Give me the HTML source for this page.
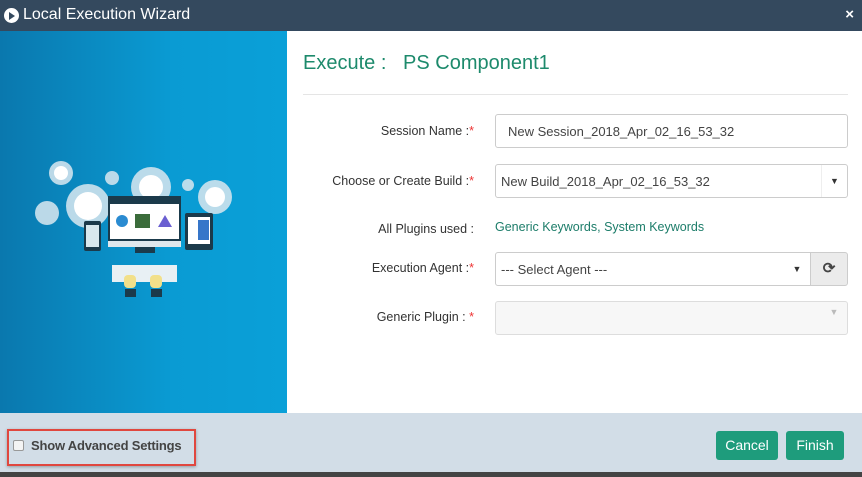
<!DOCTYPE html>
<html><head><style>
*{box-sizing:border-box;margin:0;padding:0}
body{width:862px;height:477px;overflow:hidden;font-family:"Liberation Sans",sans-serif;background:#fff;position:relative;font-size:13px;color:#333}
.hdr{position:absolute;left:0;top:0;width:862px;height:31px;background:#34495e;color:#fff;font-size:16px}
.hdr .t{position:absolute;left:23px;top:6px}
.hdr .ic{position:absolute;left:4px;top:8px;width:15px;height:15px;border-radius:50%;background:#fff}
.hdr .ic:after{content:"";position:absolute;left:5px;top:3.5px;border-left:6px solid #34495e;border-top:4px solid transparent;border-bottom:4px solid transparent}
.hdr .x{position:absolute;right:8px;top:6px;font-size:15px;font-weight:bold}
.left{position:absolute;left:0;top:31px;width:287px;height:382px;background:linear-gradient(90deg,#0a78ae,#0a9bd3 60%,#0aa0d8)}
.h2{position:absolute;left:303px;top:52px;font-size:20px;color:#1d8a6c}
.sep{position:absolute;left:303px;top:94px;width:545px;height:1px;background:#e5e5e5}
.lbl{position:absolute;right:388px;text-align:right;font-size:12.5px;color:#333}
.lbl b{color:#e33;font-weight:normal}
.in{position:absolute;left:495px;width:353px;height:34px;border:1px solid #ccc;border-radius:3px;font-size:13px;padding:9px 12px;color:#444}
.arr{position:absolute;right:0;top:0;width:26px;height:32px;border-left:1px solid #eee;font-size:9px;text-align:center;line-height:32px;color:#333}
.foot{position:absolute;left:0;top:413px;width:862px;height:59px;background:#d2dde7}
.bot{position:absolute;left:0;top:472px;width:862px;height:5px;background:#444}
.btn{position:absolute;top:431px;height:29px;background:#1e9c7c;color:#fff;border-radius:3px;font-size:14px;text-align:center;line-height:29px}
</style></head><body>
<div class="hdr"><div class="ic"></div><div class="t">Local Execution Wizard</div><div class="x">×</div></div>
<div class="left">
<svg width="287" height="382" viewBox="0 31 287 382">
<g fill="#cfe3ee" opacity="0.9">
<circle cx="61" cy="173" r="12"/><circle cx="47" cy="213" r="12"/><circle cx="88" cy="206" r="22"/><circle cx="151" cy="187" r="20"/><circle cx="112" cy="178" r="7"/><circle cx="188" cy="185" r="6"/><circle cx="215" cy="197" r="17"/>
</g>
<g fill="#fff"><circle cx="61" cy="173" r="7"/><circle cx="88" cy="206" r="14"/><circle cx="151" cy="187" r="12"/><circle cx="215" cy="197" r="10"/></g>
<rect x="108" y="196" width="73" height="45" fill="#1b3a4b"/><rect x="110" y="204" width="69" height="35" fill="#fff"/>
<rect x="108" y="241" width="73" height="6" fill="#dfe7ec"/><rect x="135" y="247" width="20" height="6" fill="#1b3a4b"/>
<circle cx="122" cy="221" r="6" fill="#2a8bd1"/><rect x="135" y="214" width="15" height="14" fill="#3b6c3b"/><path d="M158 227l7-12 7 12z" fill="#6a5fd1"/>
<rect x="84" y="221" width="17" height="30" rx="2" fill="#1b3a4b"/><rect x="86" y="225" width="13" height="22" fill="#d8e8ee"/>
<rect x="185" y="213" width="28" height="37" rx="2" fill="#1b3a4b"/><rect x="188" y="217" width="22" height="27" fill="#fff"/><rect x="198" y="220" width="11" height="20" fill="#3676c9"/>
<rect x="112" y="265" width="65" height="17" fill="#e8f0f4"/>
<rect x="124" y="275" width="12" height="13" rx="4" fill="#f2e08a"/><rect x="150" y="275" width="12" height="13" rx="4" fill="#f2e08a"/>
<rect x="125" y="289" width="11" height="8" fill="#1b3a4b"/><rect x="151" y="289" width="11" height="8" fill="#1b3a4b"/>
</svg>
</div>
<div class="h2">Execute :&nbsp;&nbsp; PS Component1</div>
<div class="sep"></div>
<div class="lbl" style="top:124px">Session Name :<b>*</b></div>
<div class="in" style="top:114px;padding-left:12px">New Session_2018_Apr_02_16_53_32</div>
<div class="lbl" style="top:174px">Choose or Create Build :<b>*</b></div>
<div class="in" style="top:164px;padding-left:5px">New Build_2018_Apr_02_16_53_32<div class="arr">▼</div></div>
<div class="lbl" style="top:222px">All Plugins used :</div>
<div style="position:absolute;left:495px;top:220px;color:#1d7d6a;font-size:12.5px">Generic Keywords, System Keywords</div>
<div class="lbl" style="top:261px">Execution Agent :<b>*</b></div>
<div class="in" style="top:252px;width:316px;padding-left:5px;border-radius:3px 0 0 3px">--- Select Agent ---<div class="arr" style="border:none">▼</div></div>
<div style="position:absolute;left:810px;top:252px;width:38px;height:34px;border:1px solid #ccc;border-radius:0 3px 3px 0;background:#ebebeb;text-align:center;line-height:32px;font-size:15px;font-weight:bold;color:#444">⟳</div>
<div class="lbl" style="top:310px">Generic Plugin : <b>*</b></div>
<div class="in" style="top:301px;background:#f7f7f7;border-color:#ddd"><div class="arr" style="border:none;color:#bbb;top:-6px">▼</div></div>
<div class="foot"></div>
<div style="position:absolute;left:7px;top:429px;width:189px;height:37px;border:2px solid #e0473f;box-shadow:0 1px 3px rgba(0,0,0,.3)"></div>
<div style="position:absolute;left:13px;top:440px;width:11px;height:11px;border:1px solid #999;border-radius:2px;background:#f4f4f4"></div>
<div style="position:absolute;left:31px;top:438px;font-size:13px;font-weight:bold;color:#444;letter-spacing:-0.2px">Show Advanced Settings</div>
<div class="btn" style="left:716px;width:62px">Cancel</div>
<div class="btn" style="left:786px;width:58px">Finish</div>
<div class="bot"></div>
</body></html>
